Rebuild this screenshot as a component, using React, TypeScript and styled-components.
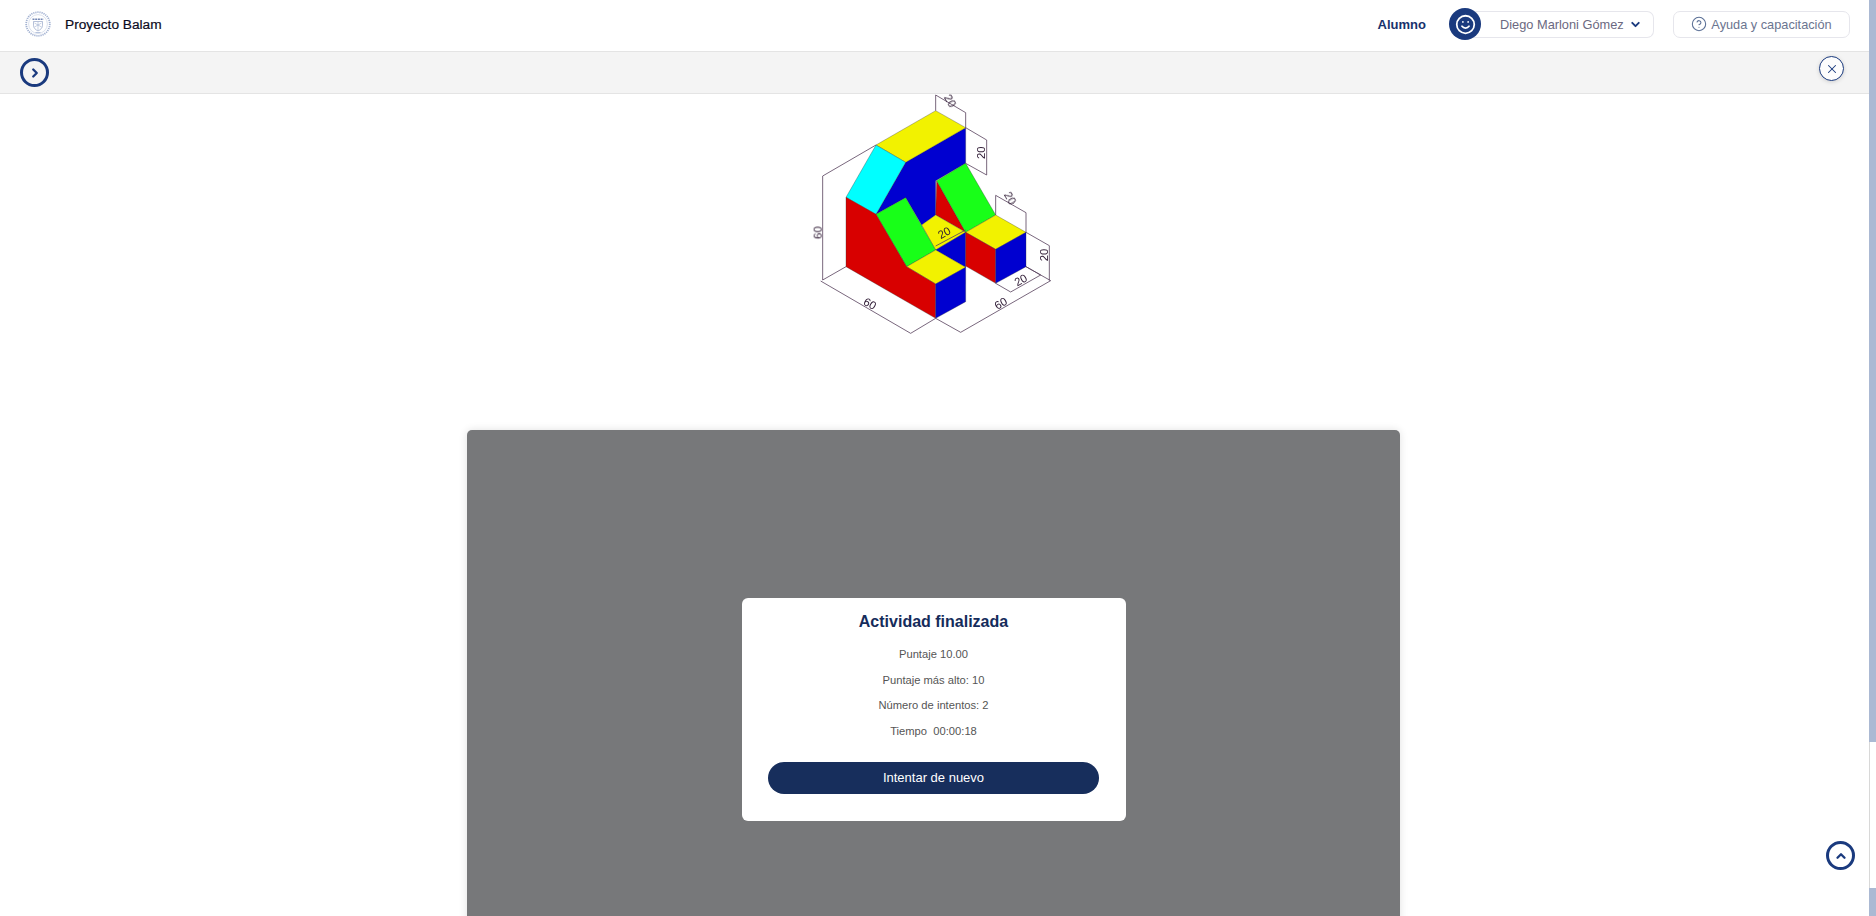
import React from 'react';
import styled, { createGlobalStyle } from 'styled-components';
import { ChevronDown, ChevronRight, ChevronUp, CircleHelp, Smile, X } from 'lucide-react';

const GlobalStyle = createGlobalStyle`
  html, body {
    margin: 0;
    padding: 0;
    height: 100%;
    overflow: hidden;
    background: #fff;
    font-family: "Liberation Sans", Arial, sans-serif;
  }
`;

const Page = styled.div`
  position: relative;
  height: 100vh;
  overflow: hidden;
  padding-right: 7px;
  box-sizing: border-box;
`;

const Header = styled.header`
  display: flex;
  align-items: center;
  height: 48px;
  padding: 0 19px 3px 25px;
  background: #fff;
  border-bottom: 1px solid #e4e4e4;
`;

const Brand = styled.div`
  display: flex;
  align-items: center;
  gap: 14px;
  flex: 1;
`;

const BrandName = styled.span`
  font-size: 13.7px;
  font-weight: 500;
  color: #0b0b1e;
  -webkit-text-stroke: 0.2px #0b0b1e;
`;

const RoleLabel = styled.span`
  font-size: 13px;
  font-weight: 700;
  color: #17326c;
  margin-right: 23px;
`;

const UserMenu = styled.div`
  display: flex;
  align-items: center;
  margin-right: 19px;
`;

const Avatar = styled.div`
  display: flex;
  align-items: center;
  justify-content: center;
  position: relative;
  z-index: 1;
  width: 32px;
  height: 32px;
  margin-right: -16px;
  border-radius: 50%;
  background: #1a3a7e;
  color: #fff;
`;

const UserPill = styled.div`
  display: flex;
  align-items: center;
  width: 189px;
  height: 27px;
  padding-left: 35px;
  box-sizing: border-box;
  border: 1px solid #e6e6ec;
  border-left: none;
  border-radius: 0 7px 7px 0;
  font-size: 12.8px;
  gap: 5px;
  color: #6b6981;

  svg {
    color: #1a3a7e;
  }
`;

const HelpButton = styled.div`
  display: flex;
  align-items: center;
  justify-content: center;
  gap: 4px;
  width: 177px;
  height: 27px;
  box-sizing: border-box;
  border: 1px solid #e6e6ec;
  border-radius: 7px;
  font-size: 12.75px;
  color: #6b7590;

  svg {
    color: #5b7096;
  }
`;

const ToolBar = styled.div`
  display: flex;
  align-items: center;
  justify-content: space-between;
  height: 41px;
  padding: 0 25px 0 20px;
  background: #f4f4f4;
  border-bottom: 1px solid #e4e4e4;
`;

const RoundButton = styled.div<{ $size: number; $ring: number }>`
  display: flex;
  align-items: center;
  justify-content: center;
  width: ${(p) => p.$size}px;
  height: ${(p) => p.$size}px;
  box-sizing: border-box;
  border: ${(p) => p.$ring}px solid #1a3a7e;
  border-radius: 50%;
  color: #1a3a7e;
`;

const CloseButton = styled(RoundButton)`
  margin-bottom: 8px;
  background: #fdfdfd;
  box-shadow: 0 1px 4px rgba(0, 0, 0, 0.15);
`;

const ScrollTop = styled(RoundButton)`
  position: absolute;
  right: 21px;
  top: 841px;
  background: #fff;
`;

const Main = styled.main`
  display: flex;
  flex-direction: column;
  align-items: center;
`;

const Figure = styled.svg`
  display: block;
  width: 290px;
  height: 256px;
  margin-bottom: 80px;
  overflow: visible;
  filter: blur(0.35px);
`;

const Panel = styled.section`
  display: flex;
  align-items: center;
  justify-content: center;
  flex-shrink: 0;
  width: 933px;
  height: 559px;
  margin-right: 2px;
  border-radius: 5px;
  background: #77787a;
  box-shadow: 0 0 8px rgba(0, 0, 0, 0.12);
`;

const ResultCard = styled.div`
  display: flex;
  flex-direction: column;
  align-items: center;
  width: 384px;
  height: 223px;
  padding-top: 15px;
  box-sizing: border-box;
  border-radius: 6px;
  background: #fff;
`;

const CardTitle = styled.h2`
  margin: 0 0 11px;
  font-size: 16px;
  line-height: 18px;
  font-weight: 700;
  color: #152c5b;
`;

const Stat = styled.p`
  margin: 0;
  font-size: 11.2px;
  line-height: 25.7px;
  color: #555;
  white-space: pre;
`;

const RetryButton = styled.button`
  width: 331px;
  height: 32px;
  margin-top: 17px;
  padding: 0;
  border: none;
  border-radius: 16px;
  background: #172e5c;
  color: #fff;
  font-family: inherit;
  font-size: 13px;
`;

const ScrollRail = styled.div`
  position: absolute;
  top: 0;
  right: 0;
  bottom: 0;
  width: 7px;
  background: #abb9d3;
`;

const ScrollThumb = styled.div`
  height: 146px;
  margin-top: 742px;
  background: #fff;
  border-left: 1px solid #d8d8d8;
`;

const DimText = styled.text`
  font-family: "Liberation Sans", Arial, sans-serif;
  font-size: 34px;
  fill: #2e1a34;
`;

const faces: [string, string][] = [
  ['#0000d0', '527,113 347,217 258,373 347,323 395,405 437,375 437,272 527,220'],
  ['#f2f200', '437,62 527,113 347,217 258,165'],
  ['#00ffff', '258,165 347,217 258,373 168,322'],
  ['#d80000', '440,272 527,427 437,375'],
  ['#18ff18', '527,220 617,375 527,427 440,272'],
  ['#f2f200', '437,375 527,427 437,480 395,405'],
  ['#0000d0', '437,480 527,427 527,532'],
  ['#18ff18', '258,373 347,323 437,480 350,530'],
  ['#f2f200', '437,480 527,532 437,582 350,530'],
  ['#d80000', '168,322 258,373 350,530 437,582 437,685 168,530'],
  ['#0000d0', '437,582 527,532 527,635 437,685'],
  ['#f2f200', '617,375 708,427 617,478 527,427'],
  ['#d80000', '527,427 617,478 617,580 527,528'],
  ['#0000d0', '617,478 708,427 708,530 617,580'],
];

const dimensionLines = [
  '437,62 437,15 527,68 527,113',
  '527,113 590,150 590,255 527,220',
  '258,165 98,258 98,570 168,530',
  '92,573 362,730 437,685',
  '437,685 512,727 782,572 708,530',
  '708,427 778,467 778,572',
  '617,375 617,316 708,368 708,427',
  '617,580 662,606 752,555 708,530',
  '437,468 527,420',
];

const dimensionLabels: [string, number, number, number][] = [
  ['20', 480, 33, 60],
  ['20', 573, 188, -90],
  ['60', 83, 428, -90],
  ['60', 240, 641, 30],
  ['60', 632, 640, -30],
  ['20', 762, 495, -90],
  ['20', 660, 325, 60],
  ['20', 692, 570, -30],
  ['20', 463, 428, -30],
];

const IsometricFigure = () => (
  <Figure viewBox="0 12 870 768">
    {faces.map(([color, points]) => (
      <polygon key={points} points={points} fill={color} stroke="#333" strokeWidth="1" />
    ))}
    {dimensionLines.map((points) => (
      <polyline key={points} points={points} fill="none" stroke="#57405c" strokeWidth="2.4" />
    ))}
    {dimensionLabels.map(([label, x, y, angle]) => (
      <DimText
        key={`${x}-${y}`}
        x={x}
        y={y}
        textAnchor="middle"
        dominantBaseline="central"
        transform={`rotate(${angle} ${x} ${y})`}
      >
        {label}
      </DimText>
    ))}
  </Figure>
);

// sello de la universidad, muy pequeño en la captura
const Seal = () => (
  <svg width="26" height="26" viewBox="0 0 26 26" fill="none" stroke="#a3b2d2">
    <circle cx="13" cy="13" r="11.8" strokeWidth="1.8" strokeDasharray="1.2 0.9" />
    <circle cx="13" cy="13" r="9.4" strokeWidth="0.4" />
    <path d="M7.5 8.3h11" strokeWidth="1.5" stroke="#7487b4" strokeDasharray="2 0.7" />
    <path d="M8.5 10.5h9v3.8c0 2.8-2.2 4.6-4.5 5.6-2.3-1-4.5-2.8-4.5-5.6z" strokeWidth="0.6" stroke="#8497c0" />
    <path d="M13 11v8M9.5 12l7 4M16.5 12l-7 4" strokeWidth="0.6" />
    <path d="M10.5 21.6h5" strokeWidth="0.9" stroke="#a9b8d6" />
  </svg>
);

const App = () => {
  return (
    <Page>
      <GlobalStyle />
      <Header>
        <Brand>
          <Seal />
          <BrandName>Proyecto Balam</BrandName>
        </Brand>
        <RoleLabel>Alumno</RoleLabel>
        <UserMenu>
          <Avatar>
            <Smile size={21} strokeWidth={2} />
          </Avatar>
          <UserPill>
            Diego Marloni Gómez
            <ChevronDown size={13} strokeWidth={3.5} />
          </UserPill>
        </UserMenu>
        <HelpButton>
          <CircleHelp size={16} strokeWidth={1.6} />
          Ayuda y capacitación
        </HelpButton>
      </Header>
      <ToolBar>
        <RoundButton $size={29} $ring={3}>
          <ChevronRight size={14} strokeWidth={4} />
        </RoundButton>
        <CloseButton $size={25} $ring={1.5}>
          <X size={14} strokeWidth={1.8} />
        </CloseButton>
      </ToolBar>
      <Main>
        <IsometricFigure />
        <Panel>
          <ResultCard>
            <CardTitle>Actividad finalizada</CardTitle>
            <Stat>Puntaje 10.00</Stat>
            <Stat>Puntaje más alto: 10</Stat>
            <Stat>Número de intentos: 2</Stat>
            <Stat>Tiempo  00:00:18</Stat>
            <RetryButton>Intentar de nuevo</RetryButton>
          </ResultCard>
        </Panel>
      </Main>
      <ScrollTop $size={29} $ring={3}>
        <ChevronUp size={14} strokeWidth={4} />
      </ScrollTop>
      <ScrollRail>
        <ScrollThumb />
      </ScrollRail>
    </Page>
  );
};

export default App;
